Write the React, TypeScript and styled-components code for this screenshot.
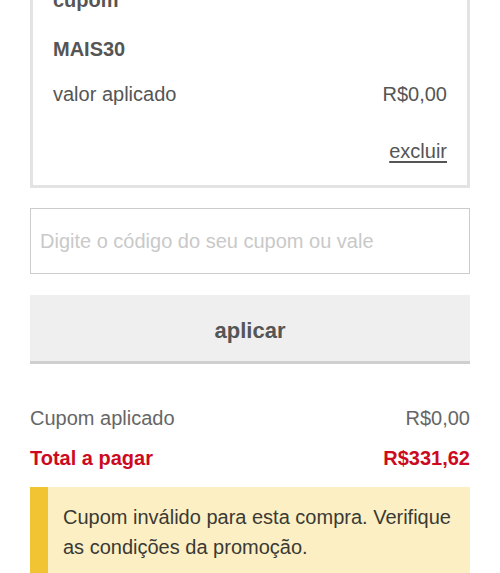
import React from 'react';
import styled, { createGlobalStyle } from 'styled-components';

const GlobalStyle = createGlobalStyle`
    html, body {
        margin: 0;
        padding: 0;
        background: #ffffff;
        overflow: hidden;
    }
    body {
        font-family: "Liberation Sans", Arial, Helvetica, sans-serif;
        -webkit-font-smoothing: antialiased;
    }
`;

const Page = styled.div`
    padding: 0 30px;
    display: flex;
    flex-direction: column;
`;

const CouponCard = styled.section`
    margin-top: -43px;
    border: 3px solid #e3e3e3;
    padding: 28px 20px 22px;
    display: flex;
    flex-direction: column;
    color: #555555;
    font-size: 20px;
    line-height: 24px;
`;

const CardTitle = styled.h4`
    margin: 0;
    font-size: 20px;
    font-weight: bold;
`;

const CouponCode = styled.div`
    margin-top: 25px;
    font-weight: bold;
`;

const Row = styled.div<{ $gap?: number }>`
    display: flex;
    justify-content: space-between;
    align-items: baseline;
    margin-top: ${p => p.$gap ?? 0}px;
`;

const RemoveLink = styled.a`
    align-self: flex-end;
    margin-top: 33px;
    color: #555555;
    text-decoration: underline;
    text-underline-offset: 3px;
    cursor: pointer;
`;

const CodeInput = styled.input`
    margin-top: 20px;
    box-sizing: border-box;
    width: 100%;
    height: 66px;
    border: 1px solid #cccccc;
    border-radius: 0;
    padding: 0 9px;
    font-family: inherit;
    font-size: 20px;
    color: #555555;
    outline: none;
    &::placeholder {
        color: #c9c9c9;
    }
`;

const ApplyButton = styled.button`
    margin-top: 21px;
    box-sizing: border-box;
    width: 100%;
    height: 69px;
    border: none;
    border-bottom: 3px solid #cfcfcf;
    border-radius: 0;
    background: #efefef;
    font-family: inherit;
    font-size: 22px;
    font-weight: bold;
    color: #555555;
    padding: 5px 0 0;
`;

const Summary = styled.div`
    margin-top: 42px;
    display: flex;
    flex-direction: column;
    font-size: 20px;
    line-height: 24px;
`;

const SummaryRow = styled(Row)<{ $total?: boolean }>`
    color: ${p => (p.$total ? '#cc0a22' : '#666666')};
    font-weight: ${p => (p.$total ? 'bold' : 'normal')};
`;

const Warning = styled.div`
    margin-top: 17px;
    display: flex;
    background: #fcefc4;
    min-height: 100px;
`;

const WarningBar = styled.div`
    width: 18px;
    flex-shrink: 0;
    background: #f1c433;
`;

const WarningText = styled.p`
    margin: 0;
    padding: 15px 16px 20px 15px;
    font-size: 20px;
    line-height: 30px;
    color: #3a3a34;
`;

export default function App() {
    return (
        <>
            <GlobalStyle />
            <Page>
                <CouponCard>
                    <CardTitle>cupom</CardTitle>
                    <CouponCode>MAIS30</CouponCode>
                    <Row $gap={21}>
                        <span>valor aplicado</span>
                        <span>R$0,00</span>
                    </Row>
                    <RemoveLink>excluir</RemoveLink>
                </CouponCard>

                <CodeInput placeholder="Digite o código do seu cupom ou vale" />
                <ApplyButton>aplicar</ApplyButton>

                <Summary>
                    <SummaryRow>
                        <span>Cupom aplicado</span>
                        <span>R$0,00</span>
                    </SummaryRow>
                    <SummaryRow $total $gap={16}>
                        <span>Total a pagar</span>
                        <span>R$331,62</span>
                    </SummaryRow>
                </Summary>

                <Warning>
                    <WarningBar />
                    <WarningText>
                        Cupom inválido para esta compra. Verifique as condições da promoção.
                    </WarningText>
                </Warning>
            </Page>
        </>
    );
}
